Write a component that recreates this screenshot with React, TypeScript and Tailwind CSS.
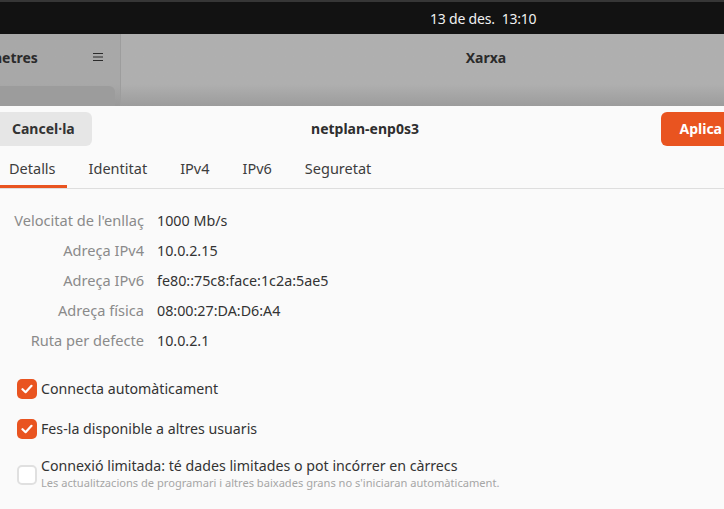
const font = { fontFamily: '"Noto Sans", "Open Sans", sans-serif' };

const details = [
  { label: "Velocitat de l'enllaç", value: "1000 Mb/s" },
  { label: "Adreça IPv4", value: "10.0.2.15" },
  { label: "Adreça IPv6", value: "fe80::75c8:face:1c2a:5ae5" },
  { label: "Adreça física", value: "08:00:27:DA:D6:A4" },
  { label: "Ruta per defecte", value: "10.0.2.1" },
];

const tabs = ["Detalls", "Identitat", "IPv4", "IPv6", "Seguretat"];

const Check = ({ on }: { on: boolean }) =>
  on ? (
    <div className="w-[20px] h-[20px] rounded-[5px] bg-[#e95420] flex items-center justify-center shrink-0">
      <svg width="12" height="10" viewBox="0 0 12 10">
        <path d="M1.5 5.2 L4.6 8.2 L10.5 1.8" fill="none" stroke="white" strokeWidth="2.2" strokeLinecap="round" strokeLinejoin="round" />
      </svg>
    </div>
  ) : (
    <div className="w-[20px] h-[20px] rounded-[5px] border-2 border-[#e0e0e0] bg-white shrink-0" />
  );

export default function App() {
  return (
    <div className="w-[724px] h-[509px] overflow-hidden flex flex-col bg-[#fafafa]" style={font}>
      {/* top bar */}
      <div className="h-[34px] shrink-0 bg-[#121212] border-t-2 border-[#363636] flex items-center">
        <span className="ml-[430px] text-[14px] text-[#f0f0f0] tracking-[-0.2px]">13 de des.&nbsp;&nbsp;13:10</span>
      </div>

      {/* dimmed settings window */}
      <div className="h-[72px] shrink-0 flex bg-gradient-to-b from-[#afafaf] from-70% to-[#9c9c9c]">
        <div className="w-[121px] shrink-0 overflow-hidden border-r border-[#9d9d9d] bg-gradient-to-b from-[#a8a8a8] from-70% to-[#999] flex flex-col">
          <div className="h-[46px] shrink-0 flex items-center justify-between pr-[16px]">
            <span className="ml-[-43px] text-[14px] font-bold text-[#2b2b2b]">Paràmetres</span>
            <svg width="12" height="10" viewBox="0 0 12 10">
              <path d="M1 1.5h10M1 5h10M1 8.5h10" stroke="#2b2b2b" strokeWidth="1" />
            </svg>
          </div>
          <div className="mt-[6px] w-[115px] h-[30px] shrink-0 rounded-tr-[6px] bg-[#9c9c9c]" />
        </div>
        <div className="w-[730px] shrink-0 h-[46px] flex items-center justify-center">
          <span className="text-[14px] font-bold text-[#2b2b2b]">Xarxa</span>
        </div>
      </div>

      {/* dialog */}
      <div className="flex-1 flex flex-col text-[#3d3d3d]">
        <div className="h-[44px] shrink-0 grid grid-cols-[1fr_auto_1fr] items-center -ml-[10px] -mr-[16px] pt-[1px]">
          <div className="flex">
            <button className="h-[34px] pl-[22px] pr-[17px] rounded-[6px] bg-[#e6e6e6] text-[14px] font-bold text-[#333]">Cancel·la</button>
          </div>
          <span className="text-[14px] font-bold text-[#2e2e2e]">netplan-enp0s3</span>
          <div className="flex justify-end">
            <button className="h-[34px] pl-[18px] pr-[18px] rounded-[6px] bg-[#e95420] text-[14px] font-bold text-white">Aplica</button>
          </div>
        </div>

        <div className="h-[39px] shrink-0 flex border-b border-[#dedede] gap-[11px]">
          {tabs.map((t, i) => (
            <div
              key={t}
              className={
                i === 0
                  ? "ml-[-2px] px-[11px] flex items-center text-[14.5px] text-[#3d3d3d] border-b-[3px] border-[#e95420] pt-[3px]"
                  : "px-[11px] flex items-center text-[14.5px] text-[#3d3d3d] pt-[3px] border-b-[3px] border-transparent"
              }
            >
              {t}
            </div>
          ))}
        </div>

        <div className="flex flex-col pt-[17px]">
          {details.map((d) => (
            <div key={d.label} className="h-[30px] flex items-center gap-[13px]">
              <span className="w-[144px] shrink-0 text-right text-[14.6px] text-[#8a8a8a]">{d.label}</span>
              <span className="text-[14.3px] text-[#333]">{d.value}</span>
            </div>
          ))}
        </div>

        <div className="flex flex-col pl-[17px] mt-[23px]">
          <div className="h-[20px] flex items-center gap-[4px]">
            <Check on />
            <span className="text-[14.2px] text-[#333]">Connecta automàticament</span>
          </div>
          <div className="h-[20px] mt-[20px] flex items-center gap-[4px]">
            <Check on />
            <span className="text-[14.2px] text-[#333]">Fes-la disponible a altres usuaris</span>
          </div>
          <div className="mt-[17px] flex items-start gap-[4px]">
            <div className="mt-[9px]">
              <Check on={false} />
            </div>
            <div className="flex flex-col">
              <span className="text-[14.2px] leading-[20px] text-[#333]">Connexió limitada: té dades limitades o pot incórrer en càrrecs</span>
              <span className="text-[11.1px] leading-[14px] text-[#a6a6a6]">Les actualitzacions de programari i altres baixades grans no s'iniciaran automàticament.</span>
            </div>
          </div>
        </div>
      </div>
    </div>
  );
}
